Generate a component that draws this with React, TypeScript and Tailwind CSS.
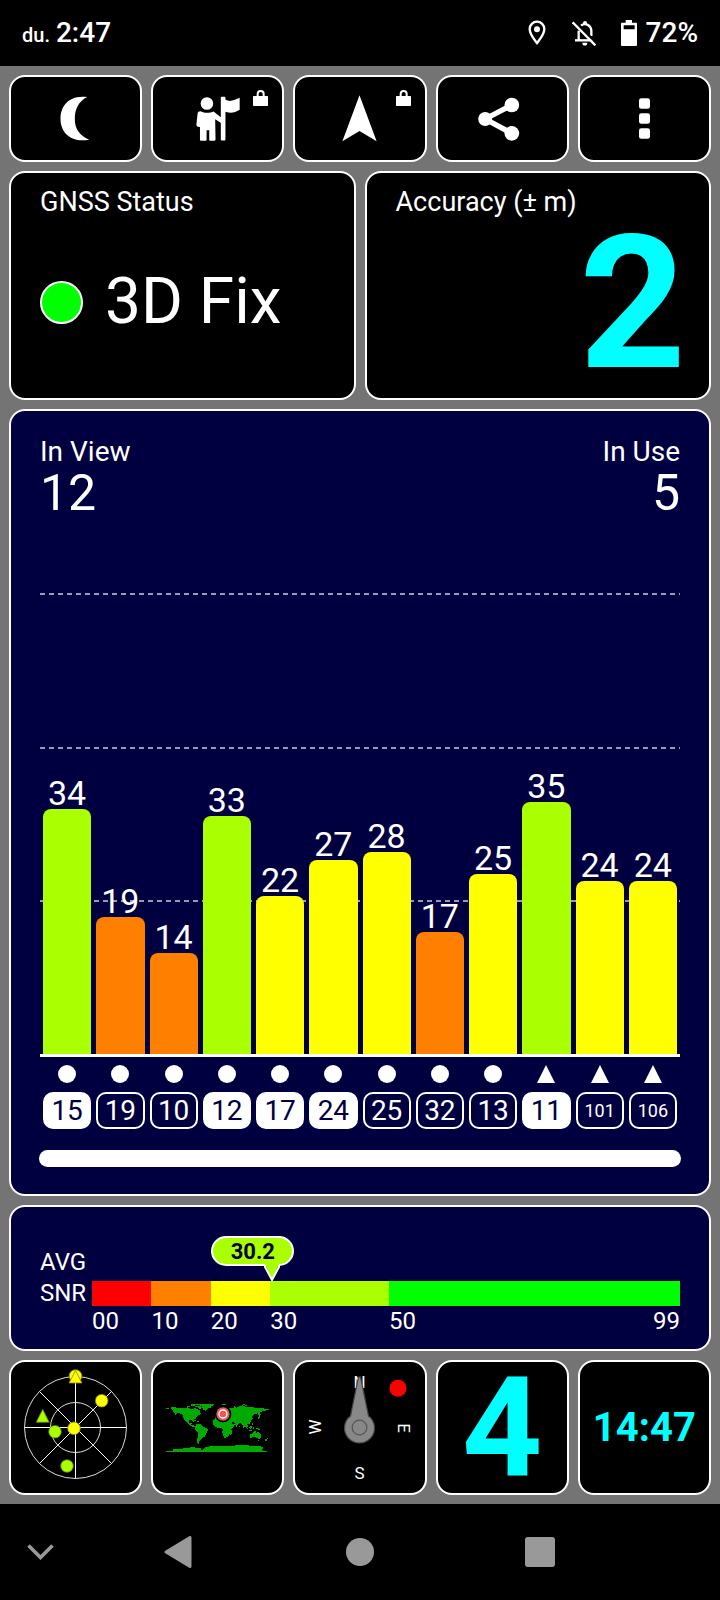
import type { ReactNode } from 'react';
import clsx from 'clsx';

interface Satellite {
  id: number;
  snr: number;
  shape: 'circle' | 'triangle';
  inUse: boolean;
}

const SATELLITES: Satellite[] = [
  { id: 15, snr: 34, shape: 'circle', inUse: true },
  { id: 19, snr: 19, shape: 'circle', inUse: false },
  { id: 10, snr: 14, shape: 'circle', inUse: false },
  { id: 12, snr: 33, shape: 'circle', inUse: true },
  { id: 17, snr: 22, shape: 'circle', inUse: true },
  { id: 24, snr: 27, shape: 'circle', inUse: true },
  { id: 25, snr: 28, shape: 'circle', inUse: false },
  { id: 32, snr: 17, shape: 'circle', inUse: false },
  { id: 13, snr: 25, shape: 'circle', inUse: false },
  { id: 11, snr: 35, shape: 'triangle', inUse: true },
  { id: 101, snr: 24, shape: 'triangle', inUse: false },
  { id: 106, snr: 24, shape: 'triangle', inUse: false },
];

const SNR_RANGES = [
  { from: '00', span: 10, color: 'bg-[#ff0000]' },
  { from: '10', span: 10, color: 'bg-[#ff8000]' },
  { from: '20', span: 10, color: 'bg-[#ffff00]' },
  { from: '30', span: 20, color: 'bg-[#aaff00]' },
  { from: '50', span: 49, color: 'bg-[#00ff00]' },
];

const CHART_MAX = 64;
const AVG_SNR = 30.2;

function snrColor(snr: number) {
  if (snr >= 50) return 'bg-[#00ff00]';
  if (snr >= 30) return 'bg-[#aaff00]';
  if (snr >= 20) return 'bg-[#ffff00]';
  if (snr >= 10) return 'bg-[#ff8000]';
  return 'bg-[#ff0000]';
}

function Panel({ className, children }: { className?: string; children: ReactNode }) {
  return (
    <section className={clsx('rounded-2xl border-2 border-white', className)}>{children}</section>
  );
}

function TileButton({ label, className, children }: { label: string; className?: string; children: ReactNode }) {
  return (
    <button
      type="button"
      aria-label={label}
      className={clsx(
        'relative flex items-center justify-center rounded-2xl border-2 border-white bg-black',
        className,
      )}
    >
      {children}
    </button>
  );
}

function LockBadge() {
  return (
    <svg viewBox="0 0 45 48" className="absolute right-[14px] top-[13px] h-4 w-[15px]" aria-hidden="true">
      <rect x="0" y="18" width="45" height="30" rx="2" fill="#fff" />
      <path d="M14 20V12a9 9 0 0 1 18 0v8" fill="none" stroke="#fff" strokeWidth="6" />
    </svg>
  );
}

function StatusBar() {
  return (
    <header className="flex h-[66px] items-center justify-between px-[22px] font-medium">
      <div className="flex items-baseline gap-[6px]">
        <span className="text-xl">du.</span>
        <span className="text-[28px]">2:47</span>
      </div>
      <div className="flex items-center">
        <svg viewBox="504 60 54 78" className="mr-[26px] h-[26px] w-[18px]" aria-label="Location">
          <path
            d="M531 65a22 22 0 0 0-22 22c0 16 12 29 22 42c10-13 22-26 22-42a22 22 0 0 0-22-22z"
            fill="none"
            stroke="#fff"
            strokeWidth="7"
          />
          <circle cx="531" cy="88" r="9" fill="#fff" />
        </svg>
        <svg viewBox="636 60 75 78" className="mr-6 h-[26px] w-[25px]" aria-label="Notifications off">
          <path d="M656 92v28" stroke="#fff" strokeWidth="7" />
          <path d="M645 121h54" stroke="#fff" strokeWidth="7" />
          <path d="M663 77c12-10 31-2 31 17v14" fill="none" stroke="#fff" strokeWidth="7" />
          <path d="M669 72v-3a6 6 0 0 1 12 0v3z" fill="#fff" />
          <path d="M667 128h15a7 8 0 0 1-15 0z" fill="#fff" />
          <path d="M643 63l69 69" stroke="#000" strokeWidth="7" />
          <path d="M638 67l68 69" stroke="#fff" strokeWidth="7" />
        </svg>
        <svg viewBox="783 60 48 78" className="mr-[9px] h-[26px] w-4" aria-label="Battery">
          <path
            fillRule="evenodd"
            d="M797 60h19v8h12a3 3 0 0 1 3 3v64a3 3 0 0 1-3 3h-42a3 3 0 0 1-3-3v-64a3 3 0 0 1 3-3h11zM791 76v12h33v-12z"
            fill="#fff"
          />
        </svg>
        <span className="text-[28px]">72%</span>
      </div>
    </header>
  );
}

function Toolbar() {
  return (
    <div className="grid grid-cols-5 gap-[9px]">
      <TileButton label="Night mode" className="h-[87px]">
        <svg viewBox="181 288 92 138" className="h-[46px] w-[31px]">
          <path
            d="M262 291C205 284 182 320 182 357C182 396 212 430 268 419C238 406 225 386 225 357C225 328 236 304 262 291z"
            fill="#fff"
          />
        </svg>
      </TileButton>
      <TileButton label="Guide" className="h-[87px]">
        <svg viewBox="587 288 133 138" className="h-[46px] w-11" fill="#fff">
          <circle cx="620" cy="310" r="19" />
          <path d="M603 334c8 5 27 5 37 0l24 19v17l-19-12l1 62q-1 3-4 3h-12q-3 0-3-3v-29h-8v29q0 3-3 3h-14q-3 0-3-3v-39q-10 1-11-6l4-36q1-6 11-5z" />
          <path d="M662 293q0-3 3-3h8q3 0 3 3v6c15 7 24 2 43-6v36c-16 10-27 11-43 6v84q0 3-3 3h-8q-3 0-3-3z" />
        </svg>
        <LockBadge />
      </TileButton>
      <TileButton label="Navigate" className="h-[87px]">
        <svg viewBox="1028 286 104 140" className="h-[47px] w-[35px]">
          <path d="M1080 287l51 137l-51-31l-51 31z" fill="#fff" />
        </svg>
        <LockBadge />
      </TileButton>
      <TileButton label="Share" className="h-[87px]">
        <svg viewBox="354 288 146 138" className="h-[46px] w-[49px]">
          <path d="M455 315l-80 42l80 43" fill="none" stroke="#fff" strokeWidth="16" />
          <circle cx="375" cy="357" r="21" fill="#fff" />
          <circle cx="455" cy="315" r="22" fill="#fff" />
          <circle cx="455" cy="400" r="22" fill="#fff" />
        </svg>
      </TileButton>
      <TileButton label="Menu" className="h-[87px]">
        <svg viewBox="837 296 33 122" className="h-[41px] w-[11px]" fill="#fff">
          <rect x="837" y="296" width="33" height="32" rx="7" />
          <rect x="837" y="341" width="33" height="32" rx="7" />
          <rect x="837" y="386" width="33" height="32" rx="7" />
        </svg>
      </TileButton>
    </div>
  );
}

function FixStatus() {
  return (
    <div className="grid grid-cols-2 gap-[9px]">
      <Panel className="bg-black px-[29px] pt-[13px]">
        <h2 className="text-[27px] leading-[33px]">GNSS Status</h2>
        <div className="mt-[50px] flex items-center gap-[22px]">
          <span className="size-[43px] shrink-0 rounded-full border-2 border-white bg-[#00ff00]" />
          <span className="whitespace-nowrap text-[64px] leading-[66px]">3D Fix</span>
        </div>
      </Panel>
      <Panel className="bg-black pb-[15px] pl-[29px] pr-[23px] pt-[13px]">
        <h2 className="text-[27px] leading-[33px]">Accuracy (± m)</h2>
        <p className="mt-1 text-right text-[186px] font-bold leading-[160px] text-[#00ffff]">2</p>
      </Panel>
    </div>
  );
}

function SatelliteChart() {
  return (
    <Panel className="bg-[#000040] px-[29px] pb-[27px] pt-6">
      <div className="flex justify-between">
        <div>
          <h2 className="text-[28px] leading-[33px]">In View</h2>
          <p className="text-[50px] leading-[50px]">12</p>
        </div>
        <div className="text-right">
          <h2 className="text-[28px] leading-[33px]">In Use</h2>
          <p className="text-[50px] leading-[50px]">5</p>
        </div>
      </div>

      <div className="relative mt-[75px] h-[461px]">
        {/* Grid lines */}
        <div className="absolute inset-0 grid grid-rows-3">
          {[0, 1, 2].map((line) => (
            <div
              key={line}
              className="h-[2px] bg-[repeating-linear-gradient(90deg,#9a9ab4_0_5px,transparent_5px_9px)]"
            />
          ))}
        </div>
        {/* Bars */}
        <div className="relative grid h-full grid-cols-12 gap-[5px] px-[3px]">
          {SATELLITES.map((sat) => (
            <div key={sat.id} className="flex h-full flex-col justify-end">
              <span className="text-center text-[34px] leading-8">{sat.snr}</span>
              <div
                className={clsx('shrink-0 rounded-t-lg', snrColor(sat.snr))}
                style={{ height: `${(sat.snr / CHART_MAX) * 100}%` }}
              />
            </div>
          ))}
        </div>
      </div>
      <div className="h-[3px] bg-white" />

      <div className="mt-2 grid grid-cols-12 gap-[5px] px-[3px]">
        {SATELLITES.map((sat) => (
          <div key={sat.id} className="flex flex-col items-center gap-[9px]">
            <svg viewBox="0 0 18 18" className="size-[18px]" fill="#fff" aria-hidden="true">
              {sat.shape === 'circle' ? <circle cx="9" cy="9" r="9" /> : <path d="M9 0l9 18H0z" />}
            </svg>
            <span
              className={clsx(
                'flex h-[37px] w-full items-center justify-center rounded-[10px] border-2 border-white',
                sat.id > 99 ? 'text-lg' : 'text-[28px]',
                sat.inUse && 'bg-white text-[#000040]',
              )}
            >
              {sat.id}
            </span>
          </div>
        ))}
      </div>
      <div className="-mx-px mt-[21px] h-[17px] rounded-full bg-white" />
    </Panel>
  );
}

function AverageSnr() {
  return (
    <Panel className="flex bg-[#000040] px-[29px] pb-3 pt-10 text-2xl leading-[31px]">
      <h2 className="w-[52px] shrink-0">
        AVG
        <br />
        SNR
      </h2>
      <div className="relative mt-[34px] flex-1">
        <div className="flex h-[25px]">
          {SNR_RANGES.map((range) => (
            <div key={range.from} className={range.color} style={{ flex: `${range.span} 0 0` }} />
          ))}
        </div>
        <div className="flex leading-[31px]">
          {SNR_RANGES.map((range) => (
            <div key={range.from} className="flex justify-between" style={{ flex: `${range.span} 0 0` }}>
              <span>{range.from}</span>
              {range.from === '50' && <span>99</span>}
            </div>
          ))}
        </div>
        {/* Average marker */}
        <div className="absolute -top-[45px]" style={{ left: `${(AVG_SNR / 99) * 100}%` }}>
          <div className="flex h-[30px] w-[83px] -translate-x-[60px] items-center justify-center rounded-full border-2 border-white bg-[#aaff00] text-[22px] font-bold text-[#000040]">
            {AVG_SNR}
          </div>
          <svg viewBox="0 0 16 17" className="absolute -left-[7px] top-7 h-[17px] w-4" aria-hidden="true">
            <path d="M1 0L8 16L15 0z" fill="#aaff00" />
            <path d="M0 1L8 16L16 1" fill="none" stroke="#fff" strokeWidth="2" />
          </svg>
        </div>
      </div>
    </Panel>
  );
}

function SkyPlot() {
  return (
    <svg viewBox="0 0 127 129" className="w-[127px]">
      <g fill="none" stroke="#ddd">
        <circle cx="63.5" cy="64.5" r="51" />
        <circle cx="63.5" cy="64.5" r="25" />
        <path d="M63.5 13.5v102M12.5 64.5h102M27.5 28.5l72 72M99.5 28.5l-72 72" stroke="#fff" />
      </g>
      <g fill="#ffff00" stroke="#8a8a00" strokeWidth="0.8">
        <circle cx="63.5" cy="13" r="6.3" />
        <path d="M63.5 7.5l6.5 12.5h-13z" />
        <circle cx="89.7" cy="37.7" r="6.3" />
        <circle cx="62" cy="65.3" r="6.3" />
      </g>
      <g fill="#aaff00" stroke="#558000" strokeWidth="0.8">
        <path d="M30.7 46.3l6.5 13h-13z" />
        <circle cx="43" cy="68.7" r="6.3" />
        <circle cx="55" cy="103" r="6.3" />
      </g>
    </svg>
  );
}

function WorldMap() {
  return (
    <svg viewBox="498 159 309 147" className="w-[103px]">
      <g fill="#00aa00" shapeRendering="crispEdges">
        {/* Americas */}
        <path d="M498 174h9v3h-9zM513 173l6-3l10 3h17l9 3l8-4l7 3l6 4l7-4l8 1l4 4l3-2l3 6l-3 3l5 3l-4 5l-7 3l-5 8l-6 2v7h-3l-2-5l-9 1l-1 6l3 3l7-2l-2 6l9 3l6 3l-3 3l-10-4l-10-5l-7-9l-5-5l-4-8l-2-8l-9-4h-7l-6 4l-4-1l6-4l-7-2z" />
        <path d="M573 162h26v3h-12l-4 3h-10zM598 162h43v4l-6 2l-4 6l-8 2l-4 6l-7-1l-4-6l-2-5l-6-2zM560 168h9v3h-9zM585 168h15l6 6l-6 3l-8-5h-7z" />
        <path d="M578 210h9v2h-9zM590 214h7v3h-7zM588 221h8l9 4l5 6l12 5l2 4l-6 11l-3 9l-8 4l-6 8l-3 3v5l-4 2l-3-6l1-10l3-10l-2-8l-7-8l-1-7l3-7z" />
        {/* Africa */}
        <path d="M640 210l7-5l10-1l10-2l9 5h12l4 7l6 8h7l-4 8l-8 9v8l-4 3l-4 9l-8 4h-4l-4-7l-2-10l1-8l-4-5h-13l-8-5l-4-7zM690 244l5-3v9l-3 6h-3z" />
        {/* Europe and Asia */}
        <path d="M644 204v-8h8l-2-5l6-3l-1-5l6-6l11-5l8 2l-2 4l10-3l12-1l3-5l6 4l8-4l10-3l8 4l12 1l8-1l7 3l12 2l10-2l8 3h15v4l-9 1l-4 3h-8l-7 4l3 6l-4 4l-5-9l-11 5l-6 6l4 7l-5 2l-3 6l-2 5l-8 3l4 6l-4 4l-7-7l-2 8l-3-1l-3-11l-7-3l-7 6l-3 7l-3-6l-2-7l-8-4l-4 2l-3 5l-8 3l-8-13h-7l-4-4l-5 4l-6-4l-9 5z" />
        <path d="M730 162h5v3h-5zM735 166h7v3h-7zM666 163h12v3h-12zM770 206h3v-6h3v-6h3v9l-5 5zM718 227h3v3h-3z" />
        {/* Oceania */}
        <path d="M735 228l4 1l7 9h-3zM750 229l6-2v7l-5 3l-3-4zM746 240h10v3h-10zM759 230h3v8h-3zM766 233h6l9 4v3l-9-2zM757 219h3v6h-3zM762 242h6v3h-6zM749 254l8-4l4-5h7l2 4l4-7l4 7l6 7l-2 7l-5 5l-6-4l-4-3l-9 1l-8 4zM773 270h4v3h-4zM801 263h3v4h-3zM796 268h4v4h-4z" />
        {/* Antarctica */}
        <path d="M498 304h20v-7l14-1l3 2l9-2l10-1l5-2h10l5-3h12v3l9 1l5-2l4 8h5v-3l8-6l12-2l15-1l20-1l25 2h12l6-3l30-1l15 2l12 1h12l10 2l3 3l-3 6l2 3h12v6H498z" />
      </g>
      <circle cx="669" cy="192" r="25" fill="#000" />
      <circle cx="669" cy="192" r="20" fill="#ee5555" />
      <circle cx="669" cy="192" r="12" fill="none" stroke="#fff" strokeWidth="4" />
    </svg>
  );
}

function Compass() {
  return (
    <svg viewBox="0 0 127 129" className="w-[127px]">
      <g fill="#fff" fontSize="17" textAnchor="middle">
        <text x="63.5" y="25">N</text>
        <text x="63.5" y="116">S</text>
        <text transform="translate(102 65) rotate(90)">E</text>
        <text transform="translate(25 64) rotate(-90)">W</text>
      </g>
      <path
        d="M62.5 14h2L66 21L72.5 53a15 15 0 1 1-18 0L61 21z"
        fill="#888"
        stroke="#444"
        strokeWidth="1.2"
      />
      <circle cx="63.5" cy="64.5" r="7.3" fill="none" stroke="#555" strokeWidth="1.2" />
      <circle cx="102" cy="25.3" r="8.5" fill="#ff0000" />
    </svg>
  );
}

function BottomTiles() {
  return (
    <div className="grid grid-cols-5 gap-[9px]">
      <TileButton label="Sky plot" className="h-[135px]">
        <SkyPlot />
      </TileButton>
      <TileButton label="Map" className="h-[135px]">
        <WorldMap />
      </TileButton>
      <TileButton label="Compass" className="h-[135px]">
        <Compass />
      </TileButton>
      <TileButton label="Speed" className="h-[135px] text-[140px] font-bold leading-none text-[#00ffff]">
        4
      </TileButton>
      <TileButton label="Time" className="h-[135px] text-[40px] font-bold leading-none text-[#00ffff]">
        14:47
      </TileButton>
    </div>
  );
}

function NavigationBar() {
  return (
    <nav className="grid h-24 grid-cols-[2fr_5fr_4fr_5fr_2fr] place-items-center">
      <button type="button" aria-label="Hide keyboard">
        <svg viewBox="0 0 27 16" className="h-4 w-[27px]">
          <path d="M1.5 1.5l12 12l12-12" fill="none" stroke="#999" strokeWidth="3.6" />
        </svg>
      </button>
      <button type="button" aria-label="Back">
        <svg viewBox="0 0 32 32" className="size-8">
          <path d="M26 1.5v29L2 16z" fill="#999" stroke="#999" strokeWidth="3" strokeLinejoin="round" />
        </svg>
      </button>
      <button type="button" aria-label="Home" className="size-7 rounded-full bg-[#999999]" />
      <button type="button" aria-label="Recent apps" className="size-[30px] rounded-[3px] bg-[#999999]" />
    </nav>
  );
}

export default function App() {
  return (
    <div className="min-h-screen bg-black font-['Roboto',sans-serif] text-white">
      <StatusBar />
      <main className="flex flex-col gap-[9px] bg-[#747474] p-[9px]">
        <Toolbar />
        <FixStatus />
        <SatelliteChart />
        <AverageSnr />
        <BottomTiles />
      </main>
      <NavigationBar />
    </div>
  );
}
